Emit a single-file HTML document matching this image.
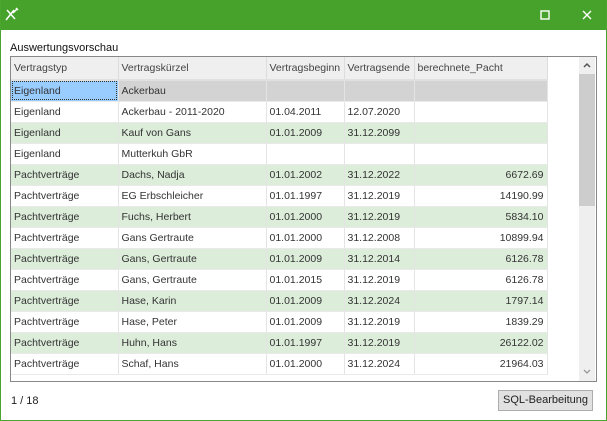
<!DOCTYPE html>
<html><head><style>
*{margin:0;padding:0;box-sizing:border-box}
body{width:607px;height:421px;background:#fff;font-family:"Liberation Sans",sans-serif;font-size:11px;color:#222;position:relative;overflow:hidden}
.win{position:absolute;left:0;top:0;width:607px;height:421px;border:1px solid #4aa62f;border-top:none}
.tb{position:absolute;left:0;top:0;width:607px;height:30px;background:#47a22c}
.lbl{position:absolute;left:10px;top:42px;font-size:11px;color:#111}
.grid{position:absolute;left:10px;top:56px;width:587px;height:326px;border:1px solid #888;overflow:hidden;background:#fff}
table{border-collapse:collapse;position:absolute;left:0;top:0;table-layout:fixed;width:536px}
td{height:21px;padding:0 3px;border-right:1px solid #e4e4e4;border-bottom:1px solid #e9e9e9;white-space:nowrap;overflow:hidden;color:#333;font-size:10.5px}
th{height:23px;padding:0 3px;font-weight:normal;text-align:left;background:#efefef;border-right:1px solid #dcdcdc;border-bottom:2px solid #e0e0e0;color:#444;white-space:nowrap;overflow:hidden;font-size:10.5px}
tr.g td{background:#dcedda}
tr.s td{background:#d3d3d3}
td.n{text-align:right}
.sb{position:absolute;left:568px;top:0;width:16px;height:324px;background:#efefef}
.th{position:absolute;left:0;top:17px;width:16px;height:132px;background:#cdcdcd}
.btn{position:absolute;left:498px;top:390px;width:95px;height:21px;border:1px solid #adadad;background:#e1e1e1;text-align:center;line-height:19px;font-size:11px}
</style></head><body>
<div class="tb">
<svg style="position:absolute;left:4px;top:6px" width="16" height="16" viewBox="0 0 16 16" fill="none" stroke="#fff" stroke-width="1.5"><path d="M2 14 L10 4 M3 4 L11 13 M9 7 L13 3 M12 2 l2 2"/></svg>
<svg style="position:absolute;left:540px;top:10px" width="10" height="10"><rect x="1" y="1" width="8" height="8" fill="none" stroke="#fff" stroke-width="1.4"/></svg>
<svg style="position:absolute;left:582px;top:10px" width="10" height="10"><path d="M1 1L9 9M9 1L1 9" stroke="#fff" stroke-width="1.4"/></svg>
</div>
<div class="win"></div>
<div class="lbl">Auswertungsvorschau</div>
<div class="grid">
<table>
<colgroup><col style="width:107px"><col style="width:148px"><col style="width:78px"><col style="width:70px"><col style="width:133px"></colgroup>
<tr><th>Vertragstyp</th><th>Vertragskürzel</th><th>Vertragsbeginn</th><th>Vertragsende</th><th>berechnete_Pacht</th></tr>
<tr class="s"><td style="background:#99ccff;outline:1px dotted #333;outline-offset:-2px">Eigenland</td><td>Ackerbau</td><td></td><td></td><td></td></tr>
<tr><td>Eigenland</td><td>Ackerbau - 2011-2020</td><td>01.04.2011</td><td>12.07.2020</td><td></td></tr>
<tr class="g"><td>Eigenland</td><td>Kauf von Gans</td><td>01.01.2009</td><td>31.12.2099</td><td></td></tr>
<tr><td>Eigenland</td><td>Mutterkuh GbR</td><td></td><td></td><td></td></tr>
<tr class="g"><td>Pachtverträge</td><td>Dachs, Nadja</td><td>01.01.2002</td><td>31.12.2022</td><td class="n">6672.69</td></tr>
<tr><td>Pachtverträge</td><td>EG Erbschleicher</td><td>01.01.1997</td><td>31.12.2019</td><td class="n">14190.99</td></tr>
<tr class="g"><td>Pachtverträge</td><td>Fuchs, Herbert</td><td>01.01.2000</td><td>31.12.2019</td><td class="n">5834.10</td></tr>
<tr><td>Pachtverträge</td><td>Gans Gertraute</td><td>01.01.2000</td><td>31.12.2008</td><td class="n">10899.94</td></tr>
<tr class="g"><td>Pachtverträge</td><td>Gans, Gertraute</td><td>01.01.2009</td><td>31.12.2014</td><td class="n">6126.78</td></tr>
<tr><td>Pachtverträge</td><td>Gans, Gertraute</td><td>01.01.2015</td><td>31.12.2019</td><td class="n">6126.78</td></tr>
<tr class="g"><td>Pachtverträge</td><td>Hase, Karin</td><td>01.01.2009</td><td>31.12.2024</td><td class="n">1797.14</td></tr>
<tr><td>Pachtverträge</td><td>Hase, Peter</td><td>01.01.2009</td><td>31.12.2019</td><td class="n">1839.29</td></tr>
<tr class="g"><td>Pachtverträge</td><td>Huhn, Hans</td><td>01.01.1997</td><td>31.12.2019</td><td class="n">26122.02</td></tr>
<tr><td>Pachtverträge</td><td>Schaf, Hans</td><td>01.01.2000</td><td>31.12.2024</td><td class="n">21964.03</td></tr>
</table>
<div class="sb"><div class="th"></div>
<svg style="position:absolute;left:4px;top:5px" width="8" height="6"><path d="M1 5L4 2L7 5" stroke="#555" stroke-width="1.5" fill="none"/></svg>
<svg style="position:absolute;left:4px;top:312px" width="8" height="6"><path d="M1 1L4 4L7 1" stroke="#999" stroke-width="1.3" fill="none"/></svg>
</div>
</div>
<div style="position:absolute;left:11px;top:395px">1 / 18</div>
<div class="btn">SQL-Bearbeitung</div>
</body></html>
